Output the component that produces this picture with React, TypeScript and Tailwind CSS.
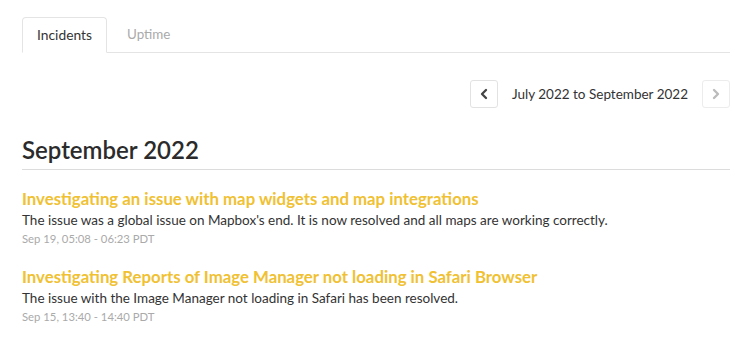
import { ChevronLeft, ChevronRight } from "lucide-react";

const incidents = [
	{
		title: "Investigating an issue with map widgets and map integrations",
		body: "The issue was a global issue on Mapbox's end. It is now resolved and all maps are working correctly.",
		date: "Sep 19, 05:08 - 06:23 PDT",
	},
	{
		title: "Investigating Reports of Image Manager not loading in Safari Browser",
		body: "The issue with the Image Manager not loading in Safari has been resolved.",
		date: "Sep 15, 13:40 - 14:40 PDT",
	},
];

export default function App() {
	return (
		<div className="w-[750px] h-[360px] bg-white text-[#333] font-['Lato',sans-serif] px-[22px] pt-[17px] overflow-hidden">
			{/* tabs */}
			<div className="flex border-b border-[#e4e4e4] mr-[-2px]">
				<div className="w-[85px] h-[36px] -mb-px flex items-center justify-center border border-[#e4e4e4] border-b-white rounded-t-[4px] bg-white text-[13.8px] text-[#333]">
					Incidents
				</div>
				<div className="px-[20px] h-[35px] flex items-center text-[13.4px] text-[#aaa]">
					Uptime
				</div>
			</div>

			{/* range pager */}
			<div className="flex justify-end items-center mt-[27px] mr-[-2px]">
				<button className="w-[28px] h-[28px] flex items-center justify-center border border-[#e2e2e2] rounded-[3px] text-[#444]">
					<ChevronLeft className="w-[16px] h-[16px]" strokeWidth={3.5} />
				</button>
				<span className="text-[13.5px] text-[#333] px-[14px]">July 2022 to September 2022</span>
				<button className="w-[28px] h-[28px] flex items-center justify-center border border-[#ececec] rounded-[3px] text-[#bbb]">
					<ChevronRight className="w-[16px] h-[16px]" strokeWidth={3.5} />
				</button>
			</div>

			<h2 className="mt-[27px] text-[24px] font-semibold text-[#2b2b2b] leading-[30px] pb-[4px] border-b border-[#dcdcdc] mr-[-2px]">
				September 2022
			</h2>

			<div className="mt-[18px] flex flex-col gap-[18px]">
				{incidents.map((inc) => (
					<div key={inc.title}>
						<div className="text-[16.8px] font-bold text-[#f0c132] leading-[22px]">{inc.title}</div>
						<div className="text-[13.5px] text-[#333] leading-[20px]">{inc.body}</div>
						<div className="text-[11.3px] text-[#aaa] leading-[18px]">{inc.date}</div>
					</div>
				))}
			</div>
		</div>
	);
}
